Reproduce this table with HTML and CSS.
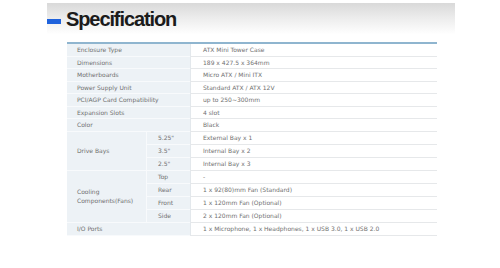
FILE: index.html
```html
<!DOCTYPE html>
<html>
<head>
<meta charset="utf-8">
<link rel="stylesheet" href="styles.css">
</head>
<body>
<div class="page">
  <div class="banner">
    <span class="dash"></span>
    <h1 class="title">Specification</h1>
  </div>
  <div class="spec">
    <div class="lab wide">Enclosure Type</div><div class="val">ATX Mini Tower Case</div>
    <div class="lab wide">Dimensions</div><div class="val">189 x 427.5 x 364mm</div>
    <div class="lab wide">Motherboards</div><div class="val">Micro ATX / Mini ITX</div>
    <div class="lab wide">Power Supply Unit</div><div class="val">Standard ATX / ATX 12V</div>
    <div class="lab wide">PCI/AGP Card Compatibility</div><div class="val">up to 250~300mm</div>
    <div class="lab wide">Expansion Slots</div><div class="val">4 slot</div>
    <div class="lab wide">Color</div><div class="val">Black</div>
    <div class="lab group span3">Drive Bays</div><div class="sub">5.25"</div><div class="val">External Bay x 1</div>
    <div class="sub">3.5"</div><div class="val">Internal Bay x 2</div>
    <div class="sub">2.5"</div><div class="val">Internal Bay x 3</div>
    <div class="lab group span4">Cooling<br>Components(Fans)</div><div class="sub">Top</div><div class="val">-</div>
    <div class="sub">Rear</div><div class="val">1 x 92(80)mm Fan (Standard)</div>
    <div class="sub">Front</div><div class="val">1 x 120mm Fan (Optional)</div>
    <div class="sub">Side</div><div class="val">2 x 120mm Fan (Optional)</div>
    <div class="lab wide">I/O Ports</div><div class="val">1 x Microphone, 1 x Headphones, 1 x USB 3.0, 1 x USB 2.0</div>
  </div>
</div>
</body>
</html>
```
FILE: styles.css
```css
html, body {
  margin: 0;
  padding: 0;
  background: #fff;
}
.page {
  width: 500px;
  height: 268px;
  padding-top: 3px;
  box-sizing: border-box;
}
.banner {
  margin-left: 47px;
  width: 408px;
  height: 37px;
  display: flex;
  align-items: flex-start;
  background: linear-gradient(to bottom, #d9d9d9 0%, #ececec 40%, #ffffff 85%);
}
.dash {
  width: 14px;
  height: 5px;
  margin-top: 16px;
  background: #1f62dc;
}
.title {
  margin: 4px 0 0 5px;
  font-family: "Liberation Sans", Arial, sans-serif;
  font-weight: bold;
  font-size: 20px;
  letter-spacing: -1.1px;
  line-height: 24px;
  color: #1b1b1b;
}
.spec {
  margin: 2px 0 0 67px;
  width: 370px;
  display: grid;
  grid-template-columns: 79px 44px 247px;
  grid-template-rows: repeat(7, 12.5px) repeat(8, 13px);
  border-top: 2px solid #8fb5cf;
  font-family: "DejaVu Sans", Verdana, sans-serif;
  font-size: 6px;
  color: #707070;
}
.spec > div {
  box-sizing: border-box;
  display: flex;
  align-items: center;
  white-space: nowrap;
}
.lab {
  background: #edf2f6;
  padding-left: 10px;
  border-bottom: 1px solid #f8fafc;
  line-height: 9px;
}
.sub {
  background: #edf2f6;
  padding-left: 11px;
  border-bottom: 1px solid #f8fafc;
  border-left: 1px solid #f8fafc;
}
.val {
  background: #fff;
  padding-left: 12px;
  border-bottom: 1px solid #e6e8ea;
  border-left: 1px solid #e3e8ec;
}
.wide { grid-column: span 2; }
.span3 { grid-row: span 3; }
.span4 { grid-row: span 4; }
```
